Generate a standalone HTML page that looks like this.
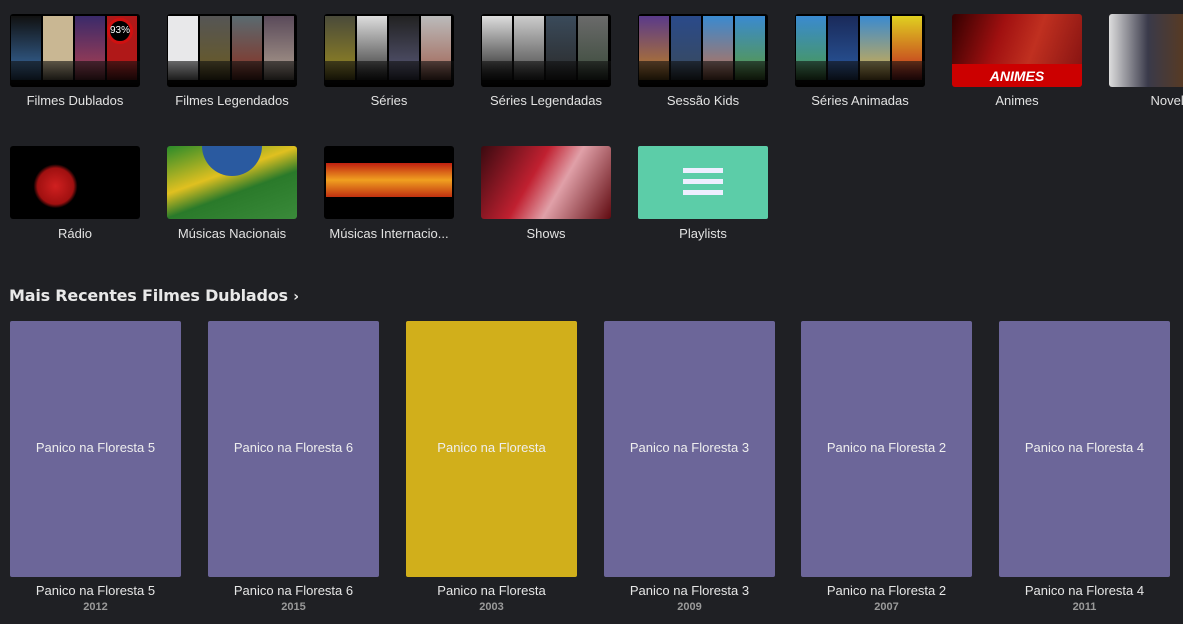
<!DOCTYPE html>
<html><head><meta charset="utf-8"><style>
*{margin:0;padding:0;box-sizing:border-box}
body{width:1183px;height:624px;overflow:hidden;background:#1f2024;font-family:"Liberation Sans",Arial,sans-serif;position:relative}
.t{position:absolute;width:130px;height:73px;border-radius:3px;overflow:hidden;background:#000}
.l{position:absolute;width:150px;text-align:center;color:#e2e2e2;font-size:13px;white-space:nowrap}
.p{position:absolute;top:2px;width:30px;height:64px}
.r{position:absolute;left:0;right:0;bottom:0;height:26px;background:linear-gradient(#1119,#000)}
.c{position:absolute;top:321px;width:171px;height:256px;background:#6c6699;border-radius:2px;color:#eee;font-size:13px;text-align:center;line-height:254px}
.ct{position:absolute;top:583px;width:171px;text-align:center;color:#e6e6e6;font-size:13px}
.cy{position:absolute;top:601px;width:171px;text-align:center;color:#9a9a9a;font-size:11px;font-weight:bold}
</style></head><body>

<div class="t" style="left:10px;top:14px">
<div class="p" style="left:1px;background:linear-gradient(#111,#3a6ea8)"></div>
<div class="p" style="left:33px;background:#c9b793"></div>
<div class="p" style="left:65px;background:linear-gradient(#3a2a6a,#b04050)"></div>
<div class="p" style="left:97px;background:#b01818"></div>
<div style="position:absolute;left:97px;top:4px;width:26px;height:26px;border-radius:50%;background:#000;border:3px solid #d01010;color:#fff;font-size:10px;line-height:20px;text-align:center">93%</div>
<div class="r"></div></div>
<div class="l" style="left:0;top:93px">Filmes Dublados</div>

<div class="t" style="left:167px;top:14px">
<div class="p" style="left:1px;background:#e8e8ea"></div>
<div class="p" style="left:33px;background:linear-gradient(#555,#6a5a20)"></div>
<div class="p" style="left:65px;background:linear-gradient(#5a6a70,#8a3020)"></div>
<div class="p" style="left:97px;background:linear-gradient(#5a4a5a,#b0a090)"></div>
<div class="r"></div></div>
<div class="l" style="left:157px;top:93px">Filmes Legendados</div>

<div class="t" style="left:324px;top:14px">
<div class="p" style="left:1px;background:linear-gradient(#4a4a3a,#9a8a20)"></div>
<div class="p" style="left:33px;background:linear-gradient(#ddd,#333)"></div>
<div class="p" style="left:65px;background:linear-gradient(#222,#5a5a7a)"></div>
<div class="p" style="left:97px;background:linear-gradient(#bbb,#a06050)"></div>
<div class="r"></div></div>
<div class="l" style="left:314px;top:93px">Séries</div>

<div class="t" style="left:481px;top:14px">
<div class="p" style="left:1px;background:linear-gradient(#ddd,#222)"></div>
<div class="p" style="left:33px;background:linear-gradient(#ccc,#444)"></div>
<div class="p" style="left:65px;background:linear-gradient(#3a4a5a,#2a2a2a)"></div>
<div class="p" style="left:97px;background:linear-gradient(#6a6a6a,#3a4a3a)"></div>
<div class="r"></div></div>
<div class="l" style="left:471px;top:93px">Séries Legendadas</div>

<div class="t" style="left:638px;top:14px">
<div class="p" style="left:1px;background:linear-gradient(#5a3a8a,#c08020)"></div>
<div class="p" style="left:33px;background:linear-gradient(#2a4a8a,#3a4a5a)"></div>
<div class="p" style="left:65px;background:linear-gradient(#3a8ad0,#c07050)"></div>
<div class="p" style="left:97px;background:linear-gradient(#3a8ad0,#5a9a3a)"></div>
<div class="r"></div></div>
<div class="l" style="left:628px;top:93px">Sessão Kids</div>

<div class="t" style="left:795px;top:14px">
<div class="p" style="left:1px;background:linear-gradient(#3a8ad0,#4a9a4a)"></div>
<div class="p" style="left:33px;background:linear-gradient(#1a2a5a,#2a5aa0)"></div>
<div class="p" style="left:65px;background:linear-gradient(#3a8ad0,#e0b040)"></div>
<div class="p" style="left:97px;background:linear-gradient(#e0d020,#c02020)"></div>
<div class="r"></div></div>
<div class="l" style="left:785px;top:93px">Séries Animadas</div>

<div class="t" style="left:952px;top:14px;background:linear-gradient(110deg,#300 0,#a01010 35%,#c03020 60%,#801010 100%)">
<div style="position:absolute;left:0;right:0;top:50px;height:23px;background:#c00;color:#fff;font-weight:bold;font-style:italic;font-size:14px;text-align:center;line-height:24px">ANIMES</div></div>
<div class="l" style="left:942px;top:93px">Animes</div>

<div class="t" style="left:1109px;top:14px;background:linear-gradient(90deg,#ddd 0,#3a3a4a 30%,#5a3a20 60%,#8a2030 100%)"></div>
<div class="l" style="left:1099px;top:93px">Novelas</div>

<div class="t" style="left:10px;top:146px;background:radial-gradient(circle at 35% 55%,#d02020 0,#a01010 18px,#000 22px)"></div>
<div class="l" style="left:0;top:226px">Rádio</div>

<div class="t" style="left:167px;top:146px;background:linear-gradient(160deg,#2a8a2a 0,#e0c020 40%,#2a7a2a 60%,#3a8a3a 100%)">
<div style="position:absolute;left:35px;top:-30px;width:60px;height:60px;border-radius:50%;background:#2a5aa0"></div></div>
<div class="l" style="left:157px;top:226px">Músicas Nacionais</div>

<div class="t" style="left:324px;top:146px;background:#000">
<div style="position:absolute;left:2px;top:17px;width:126px;height:34px;background:linear-gradient(#c02010,#f0a020,#c03010)"></div></div>
<div class="l" style="left:314px;top:226px">Músicas Internacio...</div>

<div class="t" style="left:481px;top:146px;background:linear-gradient(120deg,#3a0a10 0,#c02030 40%,#e0a0a8 60%,#600a10 100%)"></div>
<div class="l" style="left:471px;top:226px">Shows</div>

<div class="t" style="left:638px;top:146px;background:#5ccda8;border-radius:2px">
<div style="position:absolute;left:45px;top:22px;width:40px;height:5px;background:#eef"></div>
<div style="position:absolute;left:45px;top:33px;width:40px;height:5px;background:#eef"></div>
<div style="position:absolute;left:45px;top:44px;width:40px;height:5px;background:#eef"></div></div>
<div class="l" style="left:628px;top:226px">Playlists</div>

<div style="position:absolute;left:9px;top:286px;color:#e8e8e8;font-family:'DejaVu Sans',Verdana,sans-serif;font-weight:bold;font-size:16px;letter-spacing:-0.2px;white-space:nowrap">Mais Recentes Filmes Dublados <span style="font-size:14px">›</span></div>

<div class="c" style="left:10px">Panico na Floresta 5</div><div class="ct" style="left:10px">Panico na Floresta 5</div><div class="cy" style="left:10px">2012</div>
<div class="c" style="left:208px">Panico na Floresta 6</div><div class="ct" style="left:208px">Panico na Floresta 6</div><div class="cy" style="left:208px">2015</div>
<div class="c" style="left:406px;background:#d1af1b">Panico na Floresta</div><div class="ct" style="left:406px">Panico na Floresta</div><div class="cy" style="left:406px">2003</div>
<div class="c" style="left:604px">Panico na Floresta 3</div><div class="ct" style="left:604px">Panico na Floresta 3</div><div class="cy" style="left:604px">2009</div>
<div class="c" style="left:801px">Panico na Floresta 2</div><div class="ct" style="left:801px">Panico na Floresta 2</div><div class="cy" style="left:801px">2007</div>
<div class="c" style="left:999px">Panico na Floresta 4</div><div class="ct" style="left:999px">Panico na Floresta 4</div><div class="cy" style="left:999px">2011</div>
</body></html>
